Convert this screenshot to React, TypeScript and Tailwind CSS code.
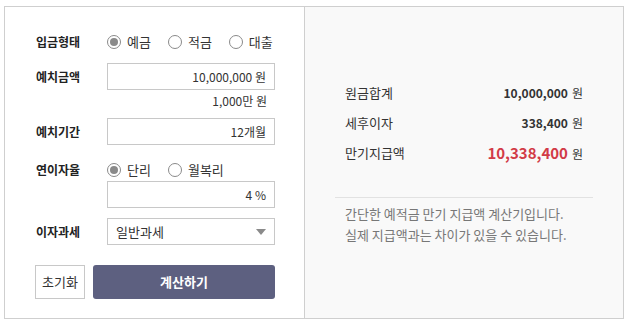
import type { ReactNode } from "react";

function Radio({ label, checked }: { label: string; checked?: boolean }) {
  return (
    <span className="flex items-center gap-[6px]">
      <span className="flex h-[14px] w-[14px] items-center justify-center rounded-full border border-[#8a8a8a] bg-white">
        {checked && <span className="h-[8px] w-[8px] rounded-full bg-[#8a8a8a]" />}
      </span>
      <span className="text-[13px] text-[#333]">{label}</span>
    </span>
  );
}

function Row({ label, children, className = "" }: { label?: string; children: ReactNode; className?: string }) {
  return (
    <div className={`flex items-center ${className}`}>
      <div className="w-[71px] shrink-0 text-[12px] font-bold text-[#222]">{label}</div>
      {children}
    </div>
  );
}

function Field({ value }: { value: string }) {
  return (
    <div className="flex h-[27px] w-[168px] items-center justify-end border border-[#c8c8c8] bg-white pr-[8px] text-[12px] text-[#333]">
      {value}
    </div>
  );
}

const RESULTS = [
  { label: "원금합계", value: "10,000,000", highlight: false },
  { label: "세후이자", value: "338,400", highlight: false },
  { label: "만기지급액", value: "10,338,400", highlight: true },
];

export default function App() {
  return (
    <div className="pl-[4px] pt-[6px] font-['Noto_Sans_CJK_KR',sans-serif]">
      <div className="flex h-[313px] w-[620px] border border-[#cfcfcf] bg-white">
        <div className="flex w-[300px] flex-col border-r border-[#cfcfcf] pl-[31px] pt-[25px]">
          <Row label="입금형태" className="h-[20px]">
            <div className="flex gap-[17px]">
              <Radio label="예금" checked />
              <Radio label="적금" />
              <Radio label="대출" />
            </div>
          </Row>
          <Row label="예치금액" className="mt-[11px]">
            <Field value="10,000,000 원" />
          </Row>
          <div className="mt-[2px] h-[18px] w-[239px] pr-[8px] text-right text-[12px] leading-[18px] text-[#333]">
            1,000만 원
          </div>
          <Row label="예치기간" className="mt-[8px]">
            <Field value="12개월" />
          </Row>
          <Row label="연이자율" className="mt-[15px] h-[20px]">
            <div className="flex gap-[17px]">
              <Radio label="단리" checked />
              <Radio label="월복리" />
            </div>
          </Row>
          <Row className="mt-[1px]">
            <Field value="4 %" />
          </Row>
          <Row label="이자과세" className="mt-[10px]">
            <div className="flex h-[27px] w-[168px] items-center justify-between border border-[#c8c8c8] bg-white pl-[8px] pr-[8px] text-[13px] text-[#333]">
              <span>일반과세</span>
              <span className="h-0 w-0 border-x-[5px] border-t-[6px] border-x-transparent border-t-[#8a8a8a]" />
            </div>
          </Row>
          <div className="-ml-[1px] mt-[20px] flex h-[34px] gap-[8px]">
            <button className="w-[50px] border border-[#c8c8c8] bg-white text-[13px] text-[#333]">초기화</button>
            <button className="w-[182px] rounded-[3px] bg-[#5d6080] text-[13px] font-bold text-white">계산하기</button>
          </div>
        </div>
        <div className="flex flex-1 flex-col bg-[#f9f9f9] pt-[71px]">
          <div className="flex flex-col px-[40px]">
            {RESULTS.map((r) => (
              <div key={r.label} className="flex h-[30px] items-center justify-between">
                <span className="text-[13px] text-[#333]">{r.label}</span>
                <span className="flex items-baseline gap-[4px] text-[#333]">
                  <span
                    className={
                      r.highlight
                        ? "text-[15px] font-bold text-[#d23b47]"
                        : "text-[12px] font-bold text-[#333]"
                    }
                  >
                    {r.value}
                  </span>
                  <span className="text-[12px]">원</span>
                </span>
              </div>
            ))}
          </div>
          <div className="mx-[30px] mt-[29px] border-t border-[#e2e2e2] pl-[10px] pt-[5px] text-[13px] leading-[21px] text-[#777]">
            <p>간단한 예적금 만기 지급액 계산기입니다.</p>
            <p>실제 지급액과는 차이가 있을 수 있습니다.</p>
          </div>
        </div>
      </div>
    </div>
  );
}
